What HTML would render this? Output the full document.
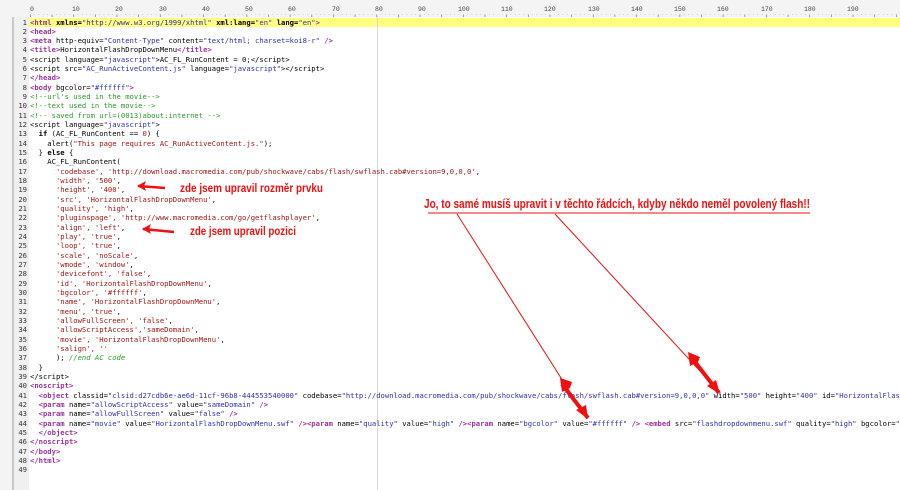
<!DOCTYPE html>
<html><head><meta charset="utf-8"><style>
html,body{margin:0;width:900px;height:490px;overflow:hidden}
body{background:#fff;position:relative;font-family:"Liberation Mono",monospace}
#tb{position:absolute;left:0;top:0;width:900px;height:6px;background:#e8e8e8;border-bottom:1px solid #cfcfcf}
#lp{position:absolute;left:0;top:7px;width:12px;height:483px;background:#f4f4f4;border-right:2px solid #c8c8c8}
#gut{position:absolute;left:14px;top:17px;width:15px;height:473px;background:#f0f0f0}
#hl{position:absolute;left:29px;top:17.5px;width:871px;height:9.3px;background:#ffff80}
#pm{position:absolute;left:377px;top:17px;width:1px;height:473px;background:#d8d8d8}
pre{position:absolute;margin:0;top:17.5px;font-size:7.2px;line-height:9.333px;white-space:pre;overflow:hidden}
#nums{left:14px;width:13px;text-align:right;color:#333}
#code{left:30px;width:870px;color:#000}
.t{color:#993399;font-weight:bold}.v{color:#2f2fb0}.c{color:#2a9a2a}.s{color:#a01515}.k{color:#000;font-weight:bold}
svg{position:absolute;left:0;top:0}
</style></head><body>
<div id="tb"></div><div id="lp"></div><div id="gut"></div><div id="hl"></div><div id="pm"></div>
<svg width="900" height="17" font-family="Liberation Mono" font-size="6.5" fill="#444" style="background:#f4f4f4">
<text x="30" y="11">0</text><text x="72" y="11">10</text><text x="115" y="11">20</text><text x="159" y="11">30</text><text x="202" y="11">40</text><text x="245" y="11">50</text><text x="288" y="11">60</text><text x="332" y="11">70</text><text x="375" y="11">80</text><text x="418" y="11">90</text><text x="458" y="11">100</text><text x="501" y="11">110</text><text x="544" y="11">120</text><text x="588" y="11">130</text><text x="631" y="11">140</text><text x="674" y="11">150</text><text x="717" y="11">160</text><text x="761" y="11">170</text><text x="804" y="11">180</text><text x="847" y="11">190</text>
<path d="M30 14.5H900" stroke="#888" stroke-width="0.6" stroke-dasharray="0.6 3.73"/>
<path d="M30 16H900" stroke="#777" stroke-width="2.5" stroke-dasharray="0.7 20.95"/>
</svg>
<pre id="nums">1
2
3
4
5
6
7
8
9
10
11
12
13
14
15
16
17
18
19
20
21
22
23
24
25
26
27
28
29
30
31
32
33
34
35
36
37
38
39
40
41
42
43
44
45
46
47
48
49</pre>
<pre id="code"><span class="t">&lt;html</span> <b>xmlns=</b><span class="v">"http://www.w3.org/1999/xhtml"</span> <b>xml:lang=</b><span class="v">"en"</span> <b>lang=</b><span class="v">"en"</span><span class="t">&gt;</span>
<span class="t">&lt;head&gt;</span>
<span class="t">&lt;meta</span> http-equiv=<span class="v">"Content-Type"</span> content=<span class="v">"text/html; charset=koi8-r"</span> <span class="t">/&gt;</span>
<span class="t">&lt;title&gt;</span>HorizontalFlashDropDownMenu<span class="t">&lt;/title&gt;</span>
&lt;script language=<span class="v">"javascript"</span>&gt;AC_FL_RunContent = 0;&lt;/script&gt;
&lt;script src=<span class="v">"AC_RunActiveContent.js"</span> language=<span class="v">"javascript"</span>&gt;&lt;/script&gt;
<span class="t">&lt;/head&gt;</span>
<span class="t">&lt;body</span> bgcolor=<span class="v">"#ffffff"</span><span class="t">&gt;</span>
<span class="c">&lt;!--url's used in the movie--&gt;</span>
<span class="c">&lt;!--text used in the movie--&gt;</span>
<span class="c">&lt;!-- saved from url=(0013)about:internet --&gt;</span>
&lt;script language=<span class="v">"javascript"</span>&gt;
  <span class="k">if</span> (AC_FL_RunContent == <span class="s">0</span>) {
    alert(<span class="s">"This page requires AC_RunActiveContent.js."</span>);
  } <span class="k">else</span> {
    AC_FL_RunContent(
      <span class="s">'codebase', 'http://download.macromedia.com/pub/shockwave/cabs/flash/swflash.cab#version=9,0,0,0'</span>,
      <span class="s">'width', '500'</span>,
      <span class="s">'height', '400'</span>,
      <span class="s">'src', 'HorizontalFlashDropDownMenu'</span>,
      <span class="s">'quality', 'high'</span>,
      <span class="s">'pluginspage', 'http://www.macromedia.com/go/getflashplayer'</span>,
      <span class="s">'align', 'left'</span>,
      <span class="s">'play', 'true'</span>,
      <span class="s">'loop', 'true'</span>,
      <span class="s">'scale', 'noScale'</span>,
      <span class="s">'wmode', 'window'</span>,
      <span class="s">'devicefont', 'false'</span>,
      <span class="s">'id', 'HorizontalFlashDropDownMenu'</span>,
      <span class="s">'bgcolor', '#ffffff'</span>,
      <span class="s">'name', 'HorizontalFlashDropDownMenu'</span>,
      <span class="s">'menu', 'true'</span>,
      <span class="s">'allowFullScreen', 'false'</span>,
      <span class="s">'allowScriptAccess','sameDomain'</span>,
      <span class="s">'movie', 'HorizontalFlashDropDownMenu'</span>,
      <span class="s">'salign', ''</span>
      ); <span class="c"><i>//end AC code</i></span>
  }
&lt;/script&gt;
<span class="t">&lt;noscript&gt;</span>
  <span class="t">&lt;object</span> classid=<span class="v">"clsid:d27cdb6e-ae6d-11cf-96b8-444553540000"</span> codebase=<span class="v">"http://download.macromedia.com/pub/shockwave/cabs/flash/swflash.cab#version=9,0,0,0"</span> width=<span class="v">"500"</span> height=<span class="v">"400"</span> id=<span class="v">"HorizontalFlashDropDownMenu"</span>
  <span class="t">&lt;param</span> name=<span class="v">"allowScriptAccess"</span> value=<span class="v">"sameDomain"</span> <span class="t">/&gt;</span>
  <span class="t">&lt;param</span> name=<span class="v">"allowFullScreen"</span> value=<span class="v">"false"</span> <span class="t">/&gt;</span>
  <span class="t">&lt;param</span> name=<span class="v">"movie"</span> value=<span class="v">"HorizontalFlashDropDownMenu.swf"</span> <span class="t">/&gt;&lt;param</span> name=<span class="v">"quality"</span> value=<span class="v">"high"</span> <span class="t">/&gt;&lt;param</span> name=<span class="v">"bgcolor"</span> value=<span class="v">"#ffffff"</span> <span class="t">/&gt;</span> <span class="t">&lt;embed</span> src=<span class="v">"flashdropdownmenu.swf"</span> quality=<span class="v">"high"</span> bgcolor=<span class="v">"#ffffff"</span>
  <span class="t">&lt;/object&gt;</span>
<span class="t">&lt;/noscript&gt;</span>
<span class="t">&lt;/body&gt;</span>
<span class="t">&lt;/html&gt;</span>
</pre>
<svg width="900" height="490" font-family="Liberation Sans Narrow, Liberation Sans, sans-serif" fill="#f01010" font-weight="bold">
<text x="180" y="192" font-size="12" textLength="143" lengthAdjust="spacingAndGlyphs">zde jsem upravil rozměr prvku</text>
<text x="190" y="235" font-size="12" textLength="106" lengthAdjust="spacingAndGlyphs">zde jsem upravil pozici</text>
<text x="424" y="208" font-size="12.5" textLength="386" lengthAdjust="spacingAndGlyphs">Jo, to samé musíš upravit i v těchto řádcích, kdyby někdo neměl povolený flash!!</text>
<path d="M428 213H810" stroke="#f01010" stroke-width="1"/>
<g stroke="#f01010" fill="none">
<path d="M138 186L165 188" stroke-width="2.5"/>
<path d="M143 229L174 232" stroke-width="2.5"/>
<path d="M457 214L575 400" stroke-width="1"/>
<path d="M555 214L712 384" stroke-width="1"/>
<path d="M562 384L588 418" stroke-width="4"/>
<path d="M692 358L719 393" stroke-width="4"/>
</g>
<polygon points="137,186 146,181 144,186 146,191" />
<polygon points="142,229 151,224 149,229 151,234" />
<polygon points="588,419 576,410 586,405"/>
<polygon points="560,378 562,392 570,388 572,382"/>
<polygon points="720,394 707,386 716,380"/>
<polygon points="688,352 690,366 698,362 700,357"/>
</svg>
</body></html>
